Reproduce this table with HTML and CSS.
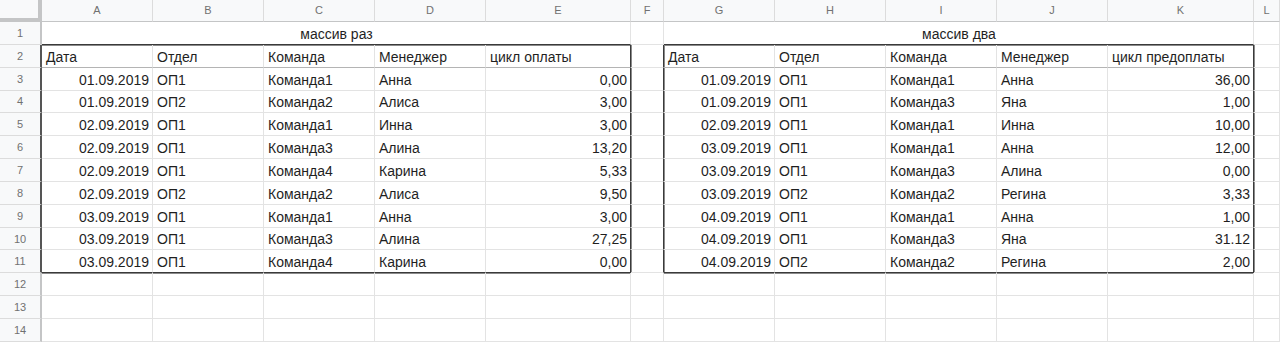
FILE: index.html
```html
<!DOCTYPE html>
<html lang="ru">
<head>
<meta charset="utf-8">
<title>Sheet</title>
<link rel="stylesheet" href="styles.css">
</head>
<body>
<div class="sheet">
  <div class="corner"></div>
  <div class="ch">A</div><div class="ch">B</div><div class="ch">C</div><div class="ch">D</div><div class="ch">E</div><div class="ch">F</div><div class="ch">G</div><div class="ch">H</div><div class="ch">I</div><div class="ch">J</div><div class="ch">K</div><div class="ch">L</div>

  <div class="rh">1</div>
  <div class="c title eb">массив раз</div><div class="c"></div><div class="c title eb">массив два</div><div class="c"></div>

  <div class="rh er">2</div>
  <div class="c hb">Дата</div><div class="c hb">Отдел</div><div class="c hb">Команда</div><div class="c hb">Менеджер</div><div class="c hb er">цикл оплаты</div><div class="c er"></div>
  <div class="c hb">Дата</div><div class="c hb">Отдел</div><div class="c hb">Команда</div><div class="c hb">Менеджер</div><div class="c hb er">цикл предоплаты</div><div class="c"></div>

  <div class="rh er">3</div>
  <div class="c n">01.09.2019</div><div class="c">ОП1</div><div class="c">Команда1</div><div class="c">Анна</div><div class="c n er">0,00</div><div class="c er"></div>
  <div class="c n">01.09.2019</div><div class="c">ОП1</div><div class="c">Команда1</div><div class="c">Анна</div><div class="c n er">36,00</div><div class="c"></div>

  <div class="rh er">4</div>
  <div class="c n">01.09.2019</div><div class="c">ОП2</div><div class="c">Команда2</div><div class="c">Алиса</div><div class="c n er">3,00</div><div class="c er"></div>
  <div class="c n">01.09.2019</div><div class="c">ОП1</div><div class="c">Команда3</div><div class="c">Яна</div><div class="c n er">1,00</div><div class="c"></div>

  <div class="rh er">5</div>
  <div class="c n">02.09.2019</div><div class="c">ОП1</div><div class="c">Команда1</div><div class="c">Инна</div><div class="c n er">3,00</div><div class="c er"></div>
  <div class="c n">02.09.2019</div><div class="c">ОП1</div><div class="c">Команда1</div><div class="c">Инна</div><div class="c n er">10,00</div><div class="c"></div>

  <div class="rh er">6</div>
  <div class="c n">02.09.2019</div><div class="c">ОП1</div><div class="c">Команда3</div><div class="c">Алина</div><div class="c n er">13,20</div><div class="c er"></div>
  <div class="c n">03.09.2019</div><div class="c">ОП1</div><div class="c">Команда1</div><div class="c">Анна</div><div class="c n er">12,00</div><div class="c"></div>

  <div class="rh er">7</div>
  <div class="c n">02.09.2019</div><div class="c">ОП1</div><div class="c">Команда4</div><div class="c">Карина</div><div class="c n er">5,33</div><div class="c er"></div>
  <div class="c n">03.09.2019</div><div class="c">ОП1</div><div class="c">Команда3</div><div class="c">Алина</div><div class="c n er">0,00</div><div class="c"></div>

  <div class="rh er">8</div>
  <div class="c n">02.09.2019</div><div class="c">ОП2</div><div class="c">Команда2</div><div class="c">Алиса</div><div class="c n er">9,50</div><div class="c er"></div>
  <div class="c n">03.09.2019</div><div class="c">ОП2</div><div class="c">Команда2</div><div class="c">Регина</div><div class="c n er">3,33</div><div class="c"></div>

  <div class="rh er">9</div>
  <div class="c n">03.09.2019</div><div class="c">ОП1</div><div class="c">Команда1</div><div class="c">Анна</div><div class="c n er">3,00</div><div class="c er"></div>
  <div class="c n">04.09.2019</div><div class="c">ОП1</div><div class="c">Команда1</div><div class="c">Анна</div><div class="c n er">1,00</div><div class="c"></div>

  <div class="rh er">10</div>
  <div class="c n">03.09.2019</div><div class="c">ОП1</div><div class="c">Команда3</div><div class="c">Алина</div><div class="c n er">27,25</div><div class="c er"></div>
  <div class="c n">04.09.2019</div><div class="c">ОП1</div><div class="c">Команда3</div><div class="c">Яна</div><div class="c n er">31.12</div><div class="c"></div>

  <div class="rh er">11</div>
  <div class="c n eb">03.09.2019</div><div class="c eb">ОП1</div><div class="c eb">Команда4</div><div class="c eb">Карина</div><div class="c n er eb">0,00</div><div class="c er"></div>
  <div class="c n eb">04.09.2019</div><div class="c eb">ОП2</div><div class="c eb">Команда2</div><div class="c eb">Регина</div><div class="c n er eb">2,00</div><div class="c"></div>

  <div class="rh">12</div>
  <div class="c"></div><div class="c"></div><div class="c"></div><div class="c"></div><div class="c"></div><div class="c"></div><div class="c"></div><div class="c"></div><div class="c"></div><div class="c"></div><div class="c"></div><div class="c"></div>

  <div class="rh">13</div>
  <div class="c"></div><div class="c"></div><div class="c"></div><div class="c"></div><div class="c"></div><div class="c"></div><div class="c"></div><div class="c"></div><div class="c"></div><div class="c"></div><div class="c"></div><div class="c"></div>

  <div class="rh">14</div>
  <div class="c"></div><div class="c"></div><div class="c"></div><div class="c"></div><div class="c"></div><div class="c"></div><div class="c"></div><div class="c"></div><div class="c"></div><div class="c"></div><div class="c"></div><div class="c"></div>
</div>
</body>
</html>
```

FILE: styles.css
```css
html, body {
  margin: 0;
  padding: 0;
  background: #ffffff;
}

body {
  font-family: "Liberation Sans", Arial, sans-serif;
  overflow: hidden;
}

.sheet {
  display: grid;
  grid-template-columns: 42px 111px 111px 111px 111px 145px 33px 111px 111px 111px 111px 146px 1fr;
  grid-template-rows: 22px repeat(14, 22.857px);
  width: 1280px;
  height: 343px;
  overflow: hidden;
}

.corner {
  background: #f8f9fa;
  border-right: 4px solid #c4c5c6;
  border-bottom: 4px solid #c4c5c6;
}

.ch {
  background: #f8f9fa;
  border-right: 1px solid #dcdcdc;
  border-bottom: 1px solid #c4c5c6;
  display: flex;
  align-items: center;
  justify-content: center;
  font-size: 11px;
  color: #717171;
  padding-bottom: 1px;
}

.rh {
  background: #f8f9fa;
  border-right: 2px solid #c4c5c6;
  border-bottom: 1px solid #dcdcdc;
  display: flex;
  align-items: center;
  justify-content: center;
  font-size: 11px;
  color: #717171;
}

.c {
  min-width: 0;
  border-right: 1px solid #e3e3e3;
  border-bottom: 1px solid #e3e3e3;
  display: flex;
  align-items: flex-end;
  padding: 0 3px 1px 4px;
  font-size: 14px;
  line-height: 17px;
  color: #1f1f1f;
  white-space: nowrap;
  overflow: hidden;
}

.n {
  justify-content: flex-end;
}

.title {
  grid-column: span 5;
  justify-content: center;
}

.hb {
  border-bottom-color: #b4b4b4;
}

.er {
  border-right-color: #3a3a3a;
  box-shadow: 1px 0 0 #8a8a8a;
}

.eb {
  border-bottom-color: #3a3a3a;
  box-shadow: 0 1px 0 #8a8a8a;
}

.er.eb {
  box-shadow: 1px 0 0 #8a8a8a, 0 1px 0 #8a8a8a;
}

.rh.er {
  border-right-color: #555555;
  box-shadow: none;
}
```
